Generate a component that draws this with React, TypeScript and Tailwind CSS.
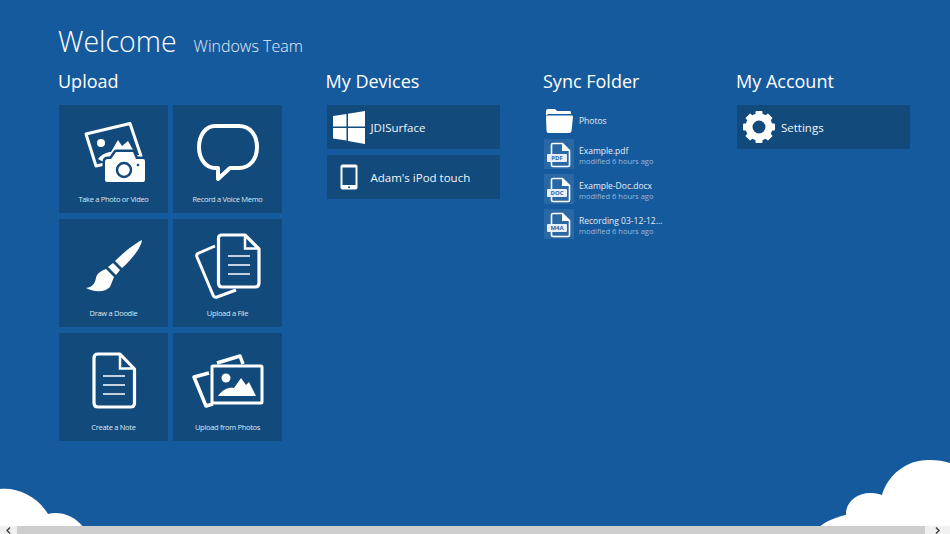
const Photo = () => (
  <svg width="109" height="85" viewBox="0 0 109 85" className="block">
    <path d="M27 29 L71 18.500 L82 51 L37 61 Z" fill="none" stroke="#fff" strokeWidth="3" strokeLinejoin="round" />
    <circle cx="42" cy="38" r="4" fill="#fff" />
    <path d="M39 54 C43 49 48 47 52 47 L59 35 L63 41 L69 36 L77 50 L50 60 Z" fill="#fff" />
    <path d="M49 54 H52 L57 47 H74 L77 54 H84 Q86 54 86 56 V75 Q86 77 84 77 H48 Q46 77 46 75 V57 Q46 54 49 54 Z" fill="#fff" stroke="#134a7c" strokeWidth="5" paintOrder="stroke" strokeLinejoin="round" />
    <circle cx="65" cy="65" r="7" fill="none" stroke="#134a7c" strokeWidth="2.500" />
    <circle cx="79" cy="60" r="1.300" fill="#134a7c" />
  </svg>
)

const Bubble = () => (
  <svg width="109" height="85" viewBox="0 0 109 85" className="block">
    <path d="M42 21 H66 C77 21 84 30 84 42 C84 54 77 63 66 63 H57 L45 74 V63 H42 C33 63 26 54 26 42 C26 30 33 21 42 21 Z" fill="none" stroke="#fff" strokeWidth="4" strokeLinejoin="round" />
  </svg>
)

const Brush = () => (
  <svg width="109" height="85" viewBox="0 0 109 85" className="block">
    <path d="M83 21 C82 29 73 40 63 49 L56 42 C65 33 75 25 83 21 Z" fill="#fff" />
    <path d="M54 44 L61 51 L57 56 L49 48 Z" fill="#fff" />
    <path d="M47 50 L55 58 L51 68 C46 73 37 74 27 69 C34 68 36 64 37 59 C38 54 42 52 47 50 Z" fill="#fff" />
  </svg>
)

const FileUp = () => (
  <svg width="109" height="85" viewBox="0 0 109 85" className="block">
    <path d="M42 27 L26 34 Q23 35 24 38 L40 76 Q41 79 44 78 L63 71" fill="none" stroke="#fff" strokeWidth="3" strokeLinejoin="round" />
    <path d="M49 16 H72 L86 30 V64 Q86 68 82 68 H49 Q45.500 68 45.500 64 V19 Q45.500 16 49 16 Z" fill="#134a7c" stroke="#fff" strokeWidth="3.200" strokeLinejoin="round" />
    <path d="M72 16 V29.500 H86" fill="none" stroke="#fff" strokeWidth="2.500" />
    <path d="M55 37 H77 M55 46 H77 M55 55 H77" stroke="#fff" strokeWidth="1.500" />
  </svg>
)

const Note = () => (
  <svg width="109" height="85" viewBox="0 0 109 85" className="block">
    <path d="M39 21 H61 L75.500 36 V70 Q75.500 74 71.500 74 H39 Q35 74 35 70 V25 Q35 21 39 21 Z" fill="none" stroke="#fff" strokeWidth="3.200" strokeLinejoin="round" />
    <path d="M61 21 V35.500 H75.500" fill="none" stroke="#fff" strokeWidth="2.500" />
    <path d="M44 43 H66 M44 52 H66 M44 61 H66" stroke="#fff" strokeWidth="1.500" />
  </svg>
)

const Photos = () => (
  <svg width="109" height="85" viewBox="0 0 109 85" className="block">
    <path d="M36 40 L21 44 L33 73 L40 71" fill="none" stroke="#fff" strokeWidth="3.500" strokeLinejoin="round" />
    <path d="M44 30 L67 23 L70 31" fill="none" stroke="#fff" strokeWidth="3.500" strokeLinejoin="round" />
    <rect x="39" y="33" width="50" height="37" rx="1" fill="#134a7c" stroke="#fff" strokeWidth="3" />
    <circle cx="53" cy="45" r="4.500" fill="#fff" />
    <path d="M45 63 C50 56 56 54 61 55 L68 45 L73 52 L76 49 L83 63 Z" fill="#fff" />
  </svg>
)

const WindowsLogo = () => (
  <svg width="32" height="33" viewBox="0 0 32 33" className="block">
    <path d="M0 5 L13.500 3 V15.500 H0 Z M15 2.800 L32 0 V15.500 H15 Z M0 17 H13.500 V29.500 L0 27.500 Z M15 17 H32 V33 L15 30 Z" fill="#fff" />
  </svg>
)

const IPod = () => (
  <svg width="18" height="26" viewBox="0 0 18 26" className="block">
    <rect x="0.500" y="0.500" width="17" height="25" rx="2" fill="#fff" />
    <rect x="2.500" y="3.500" width="13" height="17.500" fill="#134a7c" />
    <circle cx="9" cy="23.200" r="1" fill="#134a7c" />
  </svg>
)

const Gear = () => (
  <svg width="32" height="32" viewBox="0 0 32 32" className="block">
    <circle cx="16" cy="16" r="10" fill="none" stroke="#fff" strokeWidth="7" />
    <g fill="#fff">
      <rect x="12.500" y="0" width="7" height="6" rx="1" />
      <rect x="12.500" y="26" width="7" height="6" rx="1" />
      <rect x="0" y="12.500" width="6" height="7" rx="1" />
      <rect x="26" y="12.500" width="6" height="7" rx="1" />
      <rect x="12.500" y="0" width="7" height="6" rx="1" transform="rotate(45 16 16)" />
      <rect x="12.500" y="26" width="7" height="6" rx="1" transform="rotate(45 16 16)" />
      <rect x="0" y="12.500" width="6" height="7" rx="1" transform="rotate(45 16 16)" />
      <rect x="26" y="12.500" width="6" height="7" rx="1" transform="rotate(45 16 16)" />
    </g>
  </svg>
)

const Folder = () => (
  <svg width="28" height="25" viewBox="0 0 28 25" className="block">
    <path d="M1 3 Q1 1 3 1 H10 L12 3 H25 Q26 3 26 4.500 V6 H3 L1 8 Z" fill="#fff" />
    <path d="M1 9 Q1 7.500 3 7.500 H27 Q28 7.500 28 9 L26.500 23 Q26.300 25 24 25 H4 Q1.500 25 1.500 23 Z" fill="#fff" />
  </svg>
)

const FileBadge = ({ label }: { label: string }) => (
  <div className="relative h-[30px] w-[30px] bg-[#2a67a5]">
    <svg width="30" height="30" viewBox="0 0 30 30" className="block">
      <path d="M9 4.500 H18.500 L25.500 11.500 V26 Q25.500 27.500 24 27.500 H9 Q7.500 27.500 7.500 26 V6 Q7.500 4.500 9 4.500 Z" fill="none" stroke="#fff" strokeWidth="1.600" />
      <path d="M18 4.500 V12 H25.500 Z" fill="#fff" />
    </svg>
    <span className="absolute left-[3px] top-[15px] h-[8px] w-[20px] rounded-[1px] bg-[#e8eff6] text-center text-[6px] font-bold leading-[8px] text-[#2a67a5]">
      {label}
    </span>
  </div>
)

const tiles = [
  { label: "Take a Photo or Video", icon: <Photo /> },
  { label: "Record a Voice Memo", icon: <Bubble /> },
  { label: "Draw a Doodle", icon: <Brush /> },
  { label: "Upload a File", icon: <FileUp /> },
  { label: "Create a Note", icon: <Note /> },
  { label: "Upload from Photos", icon: <Photos /> },
]

const files = [
  { name: "Example.pdf", badge: "PDF" },
  { name: "Example-Doc.docx", badge: "DOC" },
  { name: "Recording 03-12-12...", badge: "M4A" },
]

const Heading = ({ children }: { children: string }) => (
  <h2 className="mb-[8px] h-[30px] text-[18px] leading-[28px] text-white">{children}</h2>
)

const Wide = ({ icon, label }: { icon: React.ReactNode; label: string }) => (
  <div className="flex h-[44px] w-[173px] items-center bg-[#134a7c]">
    <div className="flex w-[44px] shrink-0 justify-center">{icon}</div>
    <span className="pt-[2px] text-[11.500px] text-[#f2f6fa]">{label}</span>
  </div>
)

export default function App() {
  return (
    <div className="relative flex h-[534px] w-[950px] flex-col overflow-hidden bg-[#165a9e] font-['Open_Sans','Noto_Sans',sans-serif]">
      <div className="flex-1 pl-[58px] pt-[20px]">
        <div className="flex h-[47px] items-baseline">
          <h1 className="text-[28.500px] font-light leading-[42px] text-white">Welcome</h1>
          <span className="ml-[17px] text-[16px] font-light text-[#e4edf6]">Windows Team</span>
        </div>

        <div className="flex">
          <section className="w-[267.500px]">
            <Heading>Upload</Heading>
            <div className="ml-px grid w-[223px] grid-cols-[109px_109px] gap-x-[5px] gap-y-[6px]">
              {tiles.map((t) => (
                <div key={t.label} className="h-[108px] bg-[#134a7c]">
                  {t.icon}
                  <p className="mt-[3px] text-center text-[7.500px] leading-[12px] tracking-[-0.3px] text-[#dbe6f0]">{t.label}</p>
                </div>
              ))}
            </div>
          </section>

          <section className="w-[217.500px]">
            <Heading>My Devices</Heading>
            <div className="ml-px flex flex-col gap-[6px]">
              <Wide icon={<WindowsLogo />} label="JDISurface" />
              <Wide icon={<IPod />} label="Adam's iPod touch" />
            </div>
          </section>

          <section className="w-[193px]">
            <Heading>Sync Folder</Heading>
            <div className="ml-px flex flex-col gap-[5px]">
              <div className="flex h-[29px] items-center">
                <div className="flex w-[30px] justify-center pt-[2px]"><Folder /></div>
                <span className="ml-[5px] pt-[4px] text-[8.500px] text-[#e4edf6]">Photos</span>
              </div>
              {files.map((f) => (
                <div key={f.name} className="flex h-[30px] items-center">
                  <FileBadge label={f.badge} />
                  <div className="ml-[5px] pt-[3px]">
                    <p className="text-[8.500px] leading-[11px] text-[#e4edf6]">{f.name}</p>
                    <p className="text-[7.500px] leading-[11px] text-[#9ab8d6]">modified 6 hours ago</p>
                  </div>
                </div>
              ))}
            </div>
          </section>

          <section>
            <Heading>My Account</Heading>
            <div className="ml-px">
              <Wide icon={<Gear />} label="Settings" />
            </div>
          </section>
        </div>
      </div>

      {/* clouds sit over the background, behind the scrollbar */}
      <svg width="950" height="80" viewBox="0 0 950 80" className="absolute bottom-0 left-0">
        <path d="M0 35 C18 33 38 43 48 60 C58 57 74 60 84 74 V80 H0 Z" fill="#fff" />
        <path d="M818 74 C826 67 836 63 846 61 C845 48 858 38 872 39 C876 39 879 40 882 41 C888 20 908 5 930 6 C937 6 944 7 950 9 V80 H818 Z" fill="#fff" />
      </svg>

      <div className="relative flex h-[8px] items-center bg-[#f0f0f0]">
        <span className="flex w-[17px] justify-center">
          <svg width="5" height="7" viewBox="0 0 5 7"><path d="M4 0.500 L1 3.500 L4 6.500" fill="none" stroke="#444" strokeWidth="1.500" /></svg>
        </span>
        <div className="h-full w-[908px] bg-[#cdcdcd]" />
        <span className="flex flex-1 justify-center">
          <svg width="5" height="7" viewBox="0 0 5 7"><path d="M1 0.500 L4 3.500 L1 6.500" fill="none" stroke="#444" strokeWidth="1.500" /></svg>
        </span>
      </div>
    </div>
  )
}
